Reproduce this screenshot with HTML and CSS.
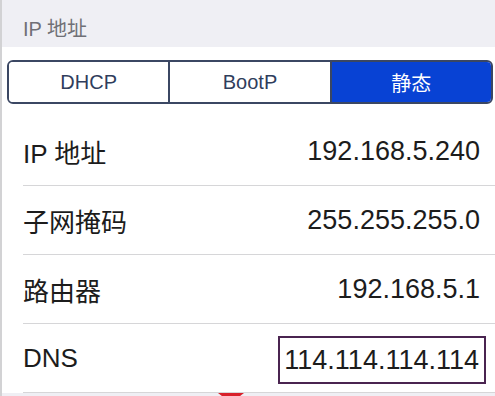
FILE: index.html
```html
<!DOCTYPE html>
<html lang="zh-CN">
<head>
    <meta charset="UTF-8">
    <meta name="viewport" content="width=device-width, initial-scale=1.0">
    <title>IP 地址</title>
    <link rel="stylesheet" href="styles.css">
</head>
<body>
    <div class="screen">
        <header class="section-title">IP 地址</header>
        <div class="segment-wrap">
            <div class="segment">
                <div class="segment-item">DHCP</div>
                <div class="segment-item">BootP</div>
                <div class="segment-item active">静态</div>
            </div>
        </div>
        <div class="list">
            <div class="row">
                <span class="label">IP 地址</span>
                <span class="value">192.168.5.240</span>
            </div>
            <div class="row">
                <span class="label">子网掩码</span>
                <span class="value">255.255.255.0</span>
            </div>
            <div class="row">
                <span class="label">路由器</span>
                <span class="value">192.168.5.1</span>
            </div>
            <div class="row">
                <span class="label">DNS</span>
                <span class="value highlight">114.114.114.114</span>
            </div>
        </div>
        <div class="footer-strip"></div>
        <div class="arrow-mark"></div>
    </div>
</body>
</html>
```

FILE: styles.css
```css
body {
    margin: 0;
    padding: 0;
    background-color: #efeff4;
    font-family: "Liberation Sans", "Noto Sans CJK SC", Arial, sans-serif;
}
.screen {
    position: relative;
    height: 396px;
    overflow: hidden;
    border-left: 2px solid #d2d2d4;
    box-sizing: border-box;
}
.section-title {
    height: 47px;
    box-sizing: border-box;
    padding: 13px 0 0 21px;
    font-size: 20px;
    color: #707076;
    background-color: #efeff4;
}
.segment-wrap {
    background: #fff;
    padding: 13px 2px 13px 5px;
}
.segment {
    display: flex;
    height: 44px;
    box-sizing: border-box;
    border: 2px solid #3b4763;
    border-radius: 6px;
    overflow: hidden;
}
.segment-item {
    flex: 1;
    display: flex;
    align-items: center;
    justify-content: center;
    font-size: 20px;
    color: #2f3d5c;
    background: #fff;
}
.segment-item + .segment-item {
    border-left: 2px solid #3b4763;
}
.segment-item.active {
    background-color: #0842d4;
    color: #fff;
}
.list {
    background: #fff;
}
.row {
    display: flex;
    align-items: center;
    justify-content: space-between;
    height: 69px;
    box-sizing: border-box;
    margin-left: 21px;
    padding-right: 15px;
    border-bottom: 1px solid #d6d6d8;
}
.label {
    font-size: 26px;
    color: #1c1c1c;
}
.value {
    font-size: 27px;
    color: #1c1c1c;
}
.highlight {
    display: flex;
    align-items: center;
    height: 48px;
    box-sizing: border-box;
    padding: 0 5px 0 4px;
    margin-right: -6px;
    margin-top: 4px;
    border: 2px solid #4a2450;
}
.footer-strip {
    height: 10px;
    background: #efeff4;
}
.arrow-mark {
    position: absolute;
    left: 216px;
    top: 393px;
    width: 0;
    height: 0;
    border-left: 13px solid transparent;
    border-right: 13px solid transparent;
    border-top: 10px solid #d8202a;
}
```
